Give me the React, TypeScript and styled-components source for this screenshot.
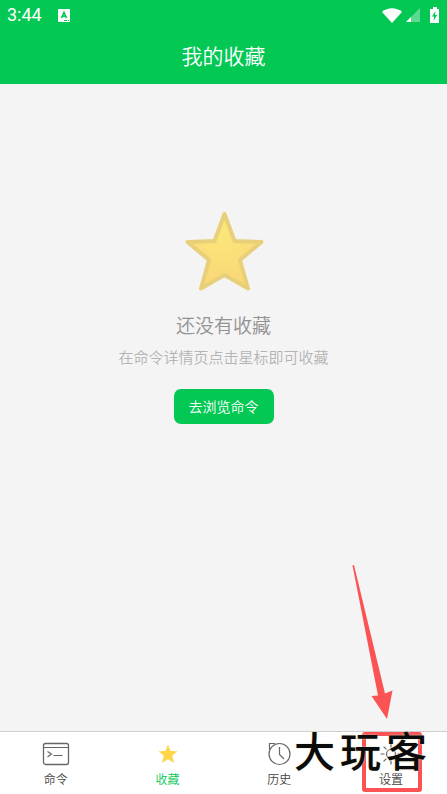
import React from "react";
import styled, { createGlobalStyle } from "styled-components";

const green = "#03c854";
const red = "#fb5254";

const GlobalStyle = createGlobalStyle`
  *, *::before, *::after { box-sizing: border-box; }
  body {
    margin: 0;
    background: #f4f4f4;
    font-family: "Noto Sans CJK SC", sans-serif;
    font-weight: 350;
  }
  svg { display: block; }
`;

const Screen = styled.div`
  display: flex;
  flex-direction: column;
  min-height: 100vh;
  overflow: hidden;
`;

const Header = styled.header`
  background: ${green};
  color: #fff;
`;

const StatusBar = styled.div`
  display: flex;
  align-items: center;
  justify-content: space-between;
  height: 30px;
  padding: 0 7px;
`;

const StatusGroup = styled.div<{ $gap: number }>`
  display: flex;
  align-items: center;
  gap: ${(p) => p.$gap}px;
`;

const Clock = styled.time`
  font-family: Roboto, sans-serif;
  font-size: 18px;
  font-weight: 400;
  line-height: 30px;
`;

const Title = styled.h1`
  margin: 0;
  padding: 9px 0 13px;
  font-size: 21px;
  line-height: 32px;
  font-weight: inherit;
  text-align: center;
`;

const EmptyState = styled.main`
  flex: 1;
  display: flex;
  flex-direction: column;
  align-items: center;
  padding: 126px 16px 24px;
`;

const EmptyTitle = styled.h2`
  margin: 19px 0 0;
  font-size: 19px;
  line-height: 28px;
  font-weight: inherit;
  color: #929292;
`;

const EmptyHint = styled.p`
  margin: 6px 0 0;
  font-size: 15px;
  line-height: 24px;
  color: #b4b4b4;
`;

const BrowseButton = styled.button`
  margin-top: 20px;
  padding: 0 15px;
  border: 0;
  border-radius: 7px;
  background: ${green};
  color: #fff;
  font-family: inherit;
  font-size: 14px;
  font-weight: inherit;
  line-height: 35px;
`;

const TabBar = styled.nav`
  position: relative;
  display: grid;
  grid-template-columns: repeat(4, 1fr);
  border-top: 1px solid #cfcfcf;
  background: #fff;
`;

const Tab = styled.button<{ $active?: boolean }>`
  position: relative;
  display: flex;
  flex-direction: column;
  align-items: center;
  gap: 3px;
  padding: 8px 0 7px;
  border: 0;
  background: none;
  color: ${(p) => (p.$active ? green : "#444")};
  font-family: inherit;
  font-size: 12px;
  font-weight: inherit;
  line-height: 16px;
`;

const Watermark = styled.div`
  position: absolute;
  right: 20px;
  top: 0;
  display: flex;
  gap: 5px;
  color: #0b0b0b;
  font-size: 41px;
  font-weight: 500;
  line-height: 34px;
  text-shadow: 0 0 2px #e2dbb8;
  pointer-events: none;
`;

const Highlight = styled.span`
  position: absolute;
  top: 0;
  left: calc(50% - 29px);
  width: 60px;
  height: 60px;
  border: 4px solid ${red};
  border-radius: 3px;
  pointer-events: none;
`;

const Arrow = styled.svg`
  position: absolute;
  left: calc(50% - 39px);
  bottom: 74px;
  pointer-events: none;
`;

const KeyboardIcon = () => (
  <svg width="12" height="13" viewBox="0 0 12 13" aria-hidden="true">
    <rect width="12" height="13" rx="1" fill="#fff" />
    <path d="M3.500 9 6 3.500 8.500 9M4.500 7.200h3" fill="none" stroke={green} strokeWidth="1.600" />
    <path d="M6 11.500h3M10 11.500h1" stroke={green} strokeWidth="1" />
  </svg>
);

const WifiIcon = () => (
  <svg width="20" height="15" viewBox="0 0 20 15" aria-hidden="true">
    <path d="M0 4C5.500-1 14.500-1 20 4L10 15Z" fill="#fff" />
  </svg>
);

const SignalIcon = () => (
  <svg width="14" height="14" viewBox="0 0 14 14" aria-hidden="true">
    <path d="M14 0v14H0Z" fill="#fff" opacity=".35" />
    <path d="M5 9v5H0Z" fill="#fff" />
  </svg>
);

const BatteryIcon = () => (
  <svg width="10" height="16" viewBox="0 0 10 16" aria-hidden="true">
    <path d="M3 0h4v2h2v14H0V2h3Z" fill="#fff" />
    <path d="M5.500 4 2 9.500h2.200L3.500 14 7.200 8H5Z" fill={green} />
  </svg>
);

const BigStar = () => (
  <svg width="80" height="82" viewBox="0 0 80 82" aria-hidden="true">
    <defs>
      <radialGradient id="starFill" cx="0.45" cy="0.2" r="0.8">
        <stop offset="0" stopColor="#fbe879" />
        <stop offset="1" stopColor="#fad577" />
      </radialGradient>
    </defs>
    <path
      d="M40.500 4 50.500 31 77.500 32 56 50 64 78.500 40.500 65 17 78.500 25 50 3.500 32 30.500 31Z"
      fill="url(#starFill)"
      stroke="#e8d07b"
      strokeWidth="4"
      strokeLinejoin="round"
    />
  </svg>
);

const TerminalIcon = () => (
  <svg width="28" height="28" viewBox="0 0 28 28" fill="none" stroke="#666" aria-hidden="true">
    <rect x="1.500" y="3.500" width="25" height="21" rx="2" strokeWidth="1.300" />
    <path d="M2 7.500h24M5.500 11.500l4 2.500-4 3M11.500 15.500h9" strokeWidth="1.200" />
  </svg>
);

const StarIcon = () => (
  <svg width="28" height="28" viewBox="0 0 28 28" aria-hidden="true">
    <path d="M14 4.500l2.600 6.400 6.900.4-5.300 4.400 1.800 7.300L14 19.200 8 23l1.800-7.300-5.300-4.400 6.900-.4Z" fill="#ffd54a" />
  </svg>
);

const HistoryIcon = () => (
  <svg width="28" height="28" viewBox="0 0 28 28" fill="none" stroke="#666" strokeWidth="1.200" aria-hidden="true">
    <circle cx="14.500" cy="14" r="10.500" />
    <path d="M14.500 7v7.500l4.500 4.500M4.500 9.500v-6H10" />
  </svg>
);

const SettingsIcon = () => (
  <svg width="28" height="28" viewBox="0 0 28 28" fill="none" stroke="#666" strokeWidth="1.200" aria-hidden="true">
    <circle cx="14" cy="14" r="4.500" />
    <path d="M14 3.500v4M14 20.500v4M3.500 14h4M20.500 14h4M6.600 6.600l2.800 2.800M18.600 18.600l2.800 2.800M21.400 6.600l-2.800 2.800M9.400 18.600l-2.800 2.800" />
  </svg>
);

export default function App() {
  return (
    <Screen>
      <GlobalStyle />
      <Header>
        <StatusBar>
          <StatusGroup $gap={16}>
            <Clock>3:44</Clock>
            <KeyboardIcon />
          </StatusGroup>
          <StatusGroup $gap={4}>
            <WifiIcon />
            <StatusGroup $gap={10}>
              <SignalIcon />
              <BatteryIcon />
            </StatusGroup>
          </StatusGroup>
        </StatusBar>
        <Title>我的收藏</Title>
      </Header>
      <EmptyState>
        <BigStar />
        <EmptyTitle>还没有收藏</EmptyTitle>
        <EmptyHint>在命令详情页点击星标即可收藏</EmptyHint>
        <BrowseButton type="button">去浏览命令</BrowseButton>
      </EmptyState>
      <TabBar>
        <Tab type="button"><TerminalIcon />命令</Tab>
        <Tab type="button" $active aria-current="page"><StarIcon />收藏</Tab>
        <Tab type="button"><HistoryIcon />历史</Tab>
        <Tab type="button">
          <SettingsIcon />
          设置
          <Highlight />
          <Arrow width="42" height="156" viewBox="0 0 42 156" aria-hidden="true">
            <path d="M.5 1.500 2 1l31 128.500 7.500-3L35 155 19.500 132l6.500-.5Z" fill={red} />
          </Arrow>
        </Tab>
        <Watermark>
          <span>大</span>
          <span>玩</span>
          <span>客</span>
        </Watermark>
      </TabBar>
    </Screen>
  );
}
